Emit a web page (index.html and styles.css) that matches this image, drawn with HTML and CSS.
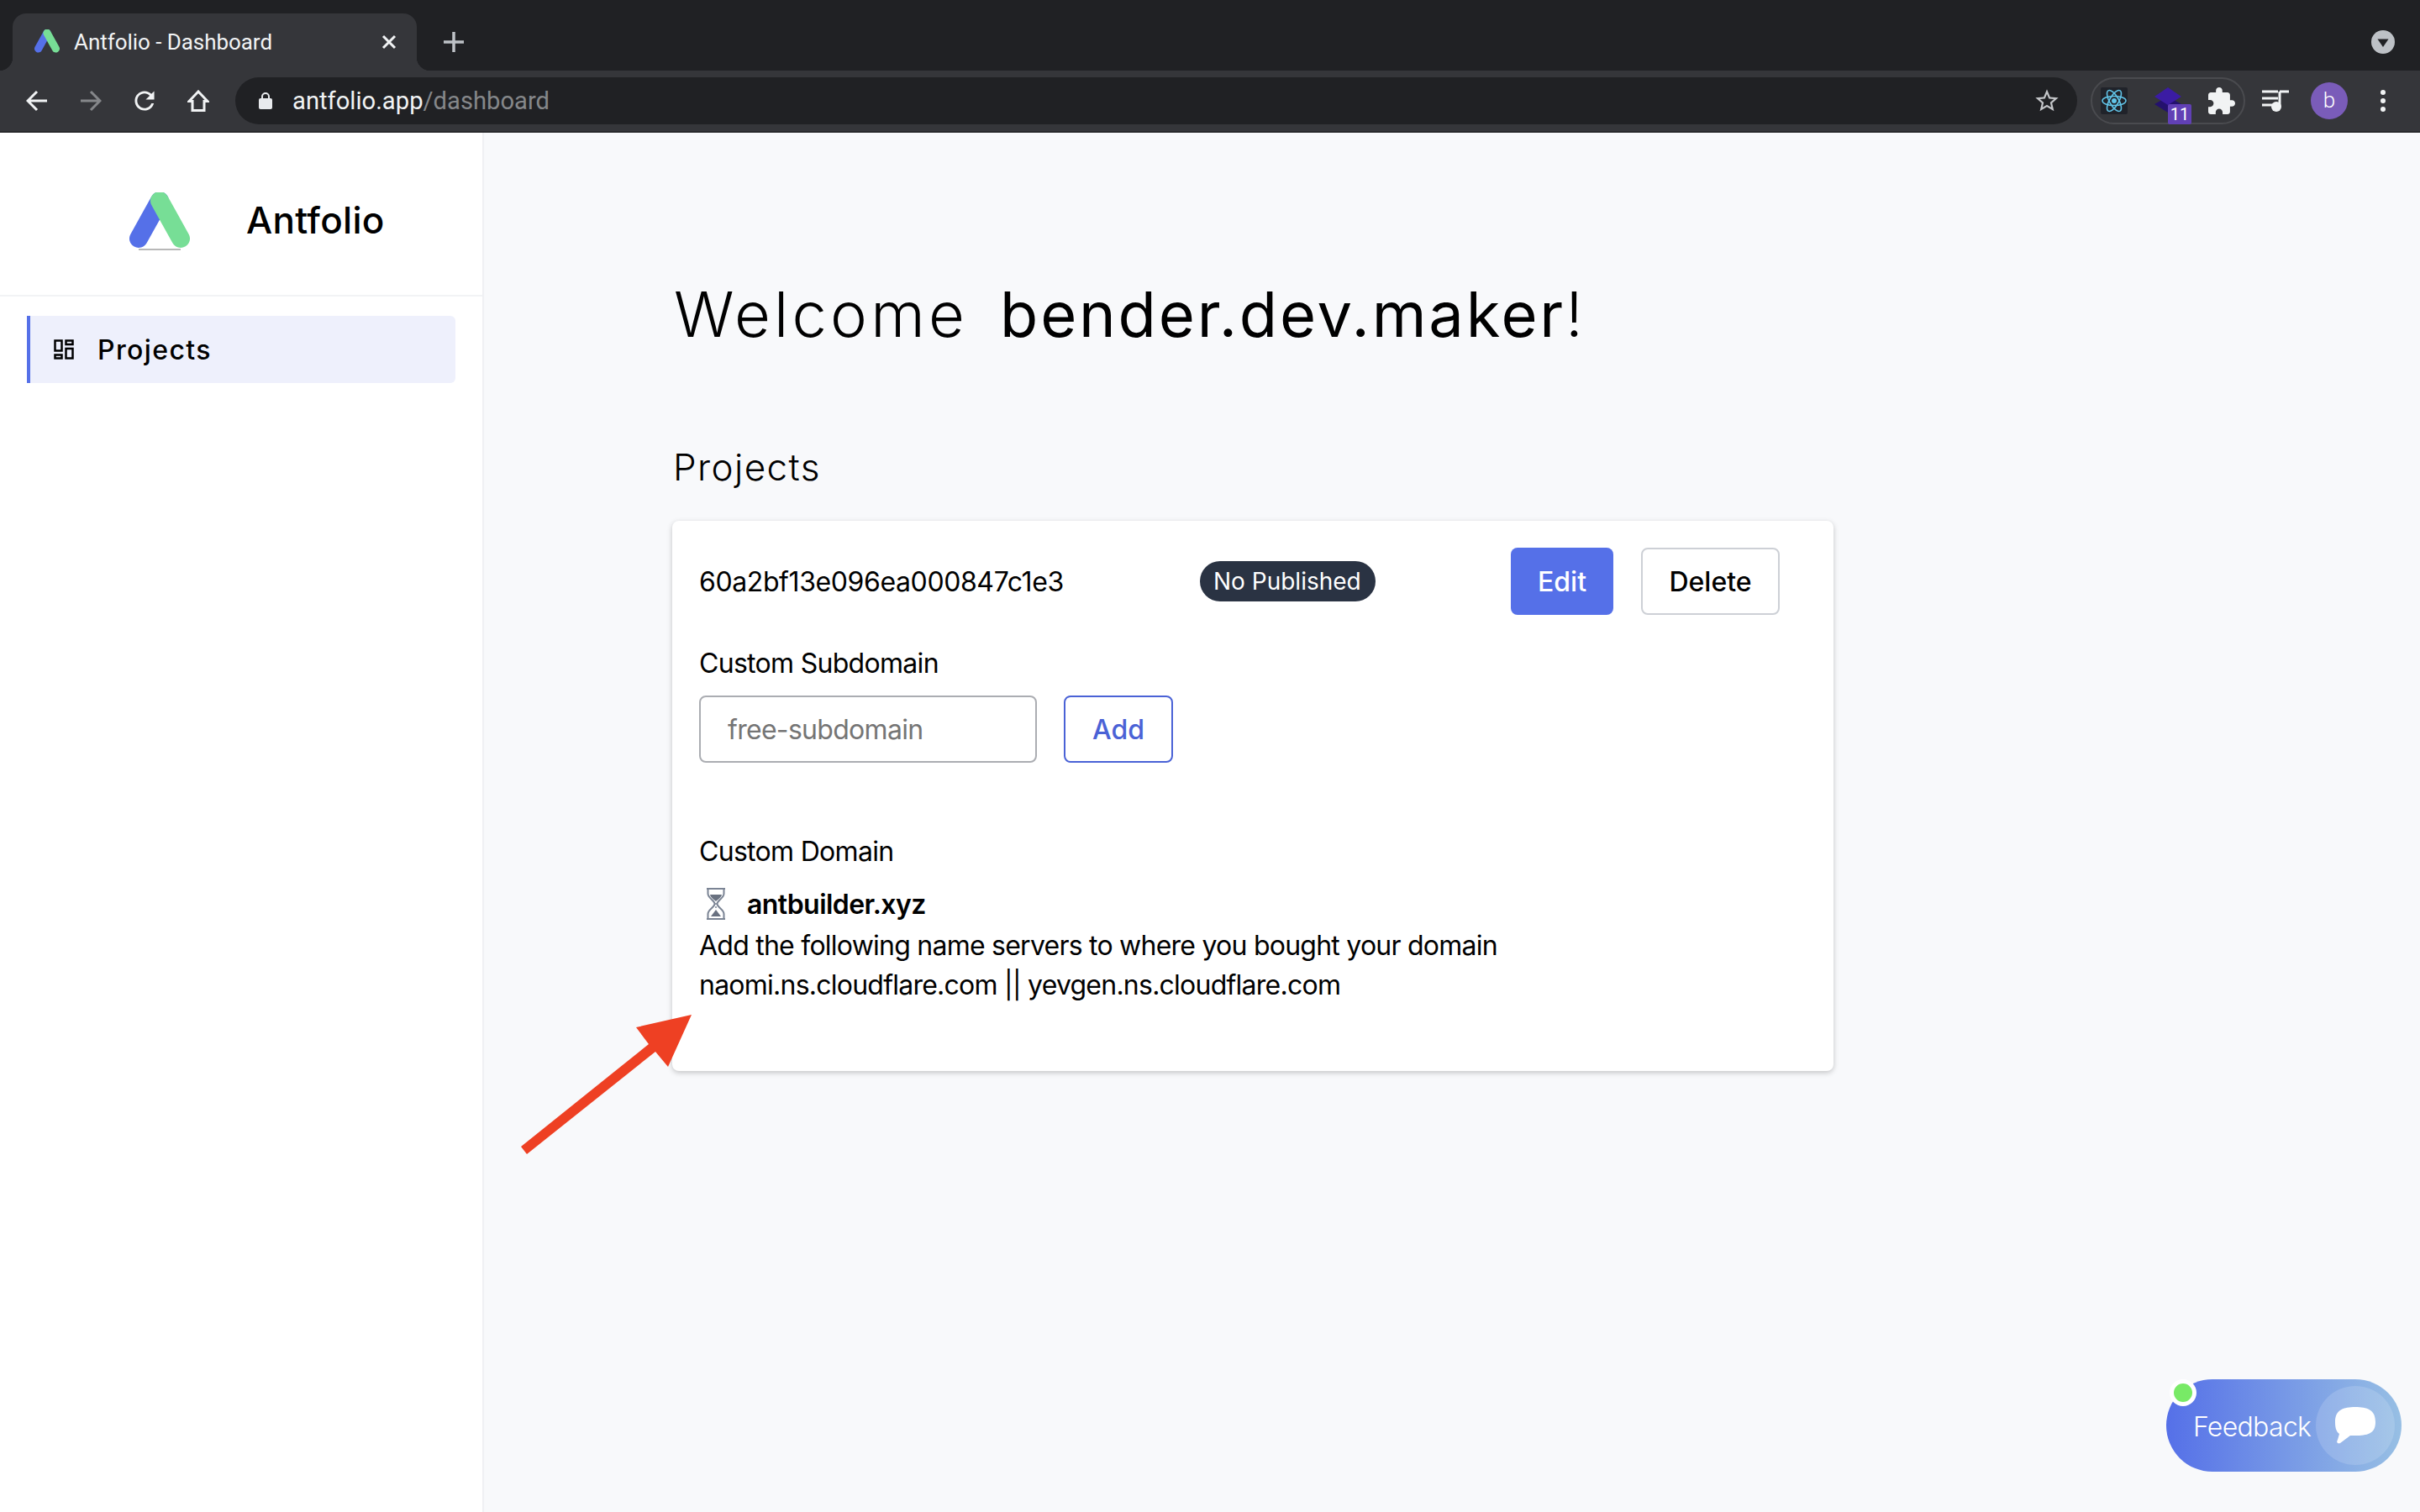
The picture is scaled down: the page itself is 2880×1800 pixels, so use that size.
FILE: index.html
```html
<!DOCTYPE html>
<html lang="en">

<head>
    <meta charset="UTF-8" />
    <meta name="viewport" content="width=device-width, initial-scale=1.0" />
    <title>Antfolio - Dashboard</title>

    <link rel="stylesheet" href="styles.css">
</head>

<body>
    <header class="browser">
        <div class="tabstrip">
            <div class="tab">
                <svg class="tab-favicon" viewBox="0 0 72 72">
                    <path d="M11 55 36 10" class="logo-blue" />
                    <path d="M36 10 61 55" class="logo-green" />
                </svg>
                <span class="tab-title">Antfolio - Dashboard</span>
                <svg class="tab-close" viewBox="0 0 18 18">
                    <path d="M2 2 16 16M16 2 2 16" />
                </svg>
            </div>
            <svg class="tab-new" viewBox="0 0 24 24">
                <path d="M12 0V24M0 12H24" />
            </svg>
            <div class="tab-search">
                <svg viewBox="0 0 28 28">
                    <circle cx="14" cy="14" r="14" fill="#bdc1c6" />
                    <path d="M7.5 10.5H20.5L14 20Z" fill="#202124" />
                </svg>
            </div>
        </div>
        <div class="toolbar">
            <svg class="nav-icon" viewBox="0 0 26 26">
                <path d="M25 13H3M13 2 2 13 13 24" />
            </svg>
            <svg class="nav-icon nav-icon-off" viewBox="0 0 26 26">
                <path d="M1 13H23M13 2 24 13 13 24" />
            </svg>
            <svg class="nav-icon nav-icon-fill" viewBox="3 3 18 18">
                <path d="M17.65 6.35C16.2 4.9 14.21 4 12 4c-4.42 0-7.99 3.58-7.99 8s3.57 8 7.99 8c3.73 0 6.84-2.55 7.73-6h-2.08c-.82 2.33-3.04 4-5.65 4-3.31 0-6-2.69-6-6s2.69-6 6-6c1.66 0 3.14.69 4.22 1.78L13 11h7V4l-2.35 2.35z" />
            </svg>
            <svg class="nav-icon" viewBox="0 0 26 26">
                <path d="M13 2 2 13.5H6V24.500H20V13.500H24Z" />
            </svg>
            <div class="omnibox">
                <svg class="omnibox-lock" viewBox="0 0 16 20">
                    <path d="M4 8V5a4 4 0 0 1 8 0V8" fill="none" stroke="#e8eaed" stroke-width="2" />
                    <rect y="7" width="16" height="13" rx="2" fill="#e8eaed" />
                </svg>
                <span class="omnibox-url">antfolio.app<span class="omnibox-path">/dashboard</span></span>
                <svg class="omnibox-star" viewBox="1 1 22 22">
                    <path d="M22 9.24l-7.19-.62L12 2 9.190 8.630 2 9.240l5.460 4.730L5.820 21 12 17.270 18.180 21l-1.630-7.030L22 9.240zM12 15.400l-3.760 2.270 1-4.280-3.320-2.880 4.380-.38L12 6.100l1.710 4.040 4.380.38-3.320 2.880 1 4.280L12 15.400z" />
                </svg>
            </div>
            <div class="extensions">
                <svg class="ext-icon" viewBox="0 0 32 32">
                    <rect width="32" height="32" rx="2" fill="#20232a" />
                    <g fill="none" stroke="#61c4e8" stroke-width="1.600">
                        <ellipse cx="16" cy="16" rx="14" ry="5.500" />
                        <ellipse cx="16" cy="16" rx="14" ry="5.500" transform="rotate(60 16 16)" />
                        <ellipse cx="16" cy="16" rx="14" ry="5.500" transform="rotate(120 16 16)" />
                    </g>
                    <circle cx="16" cy="16" r="3" fill="#61c4e8" />
                </svg>
                <div class="ext-stack">
                    <svg class="ext-icon" viewBox="0 0 32 32">
                        <path d="M16 11 32 20 16 30 0 20Z" fill="#24116e" />
                        <path d="M16 0 32 11 16 21 0 11Z" fill="#3b1ca3" />
                    </svg>
                    <span class="ext-badge">11</span>
                </div>
                <svg class="ext-icon ext-puzzle" viewBox="2 1 21 21">
                    <path d="M20.500 11H19V7c0-1.100-.9-2-2-2h-4V3.500C13 2.120 11.880 1 10.500 1S8 2.120 8 3.500V5H4c-1.100 0-1.990.9-1.990 2v3.800H3.500c1.490 0 2.700 1.210 2.700 2.700s-1.210 2.700-2.700 2.700H2V20c0 1.100.9 2 2 2h3.800v-1.500c0-1.490 1.210-2.700 2.700-2.700 1.490 0 2.700 1.210 2.700 2.700V22H17c1.100 0 2-.9 2-2v-4h1.500c1.380 0 2.500-1.120 2.500-2.500S21.880 11 20.500 11z" />
                </svg>
            </div>
            <svg class="toolbar-queue" viewBox="0 0 32 26">
                <path d="M0 2H19M0 10H19M0 18H13" stroke="#f1f3f4" stroke-width="3" fill="none" />
                <path d="M21 2V20" stroke="#f1f3f4" stroke-width="3" fill="none" />
                <path d="M21 2H32" stroke="#f1f3f4" stroke-width="3" fill="none" />
                <circle cx="17" cy="20" r="6" fill="#f1f3f4" />
            </svg>
            <div class="avatar">b</div>
            <div class="toolbar-menu">
                <i></i><i></i><i></i>
            </div>
        </div>
    </header>

    <div class="app">
        <aside class="sidebar">
            <div class="brand">
                <svg class="brand-logo" viewBox="0 0 72 72">
                    <path d="M11 55 36 10" class="logo-blue" />
                    <path d="M36 10 61 55" class="logo-green" />
                    <path d="M11 68H61" stroke="#b8b8b8" stroke-width="2" />
                </svg>
                <span class="brand-name">Antfolio</span>
            </div>
            <nav class="menu">
                <a class="menu-item">
                    <svg class="menu-icon" viewBox="0 0 24 24">
                        <path d="M1.500 1.500H9.500V13.500H1.500ZM1.500 18.500H9.500V22.500H1.500ZM14.500 1.500H22.500V6H14.500ZM14.500 11H22.500V22.500H14.500Z" />
                    </svg>
                    Projects
                </a>
            </nav>
        </aside>

        <main class="content">
            <h1 class="welcome">Welcome <b>bender.dev.maker</b>!</h1>
            <h2 class="section-title">Projects</h2>

            <section class="card">
                <div class="project-row">
                    <span class="project-id">60a2bf13e096ea000847c1e3</span>
                    <span class="badge">No Published</span>
                    <div class="project-actions">
                        <button class="button button-primary">Edit</button>
                        <button class="button button-default">Delete</button>
                    </div>
                </div>

                <label class="field-label" for="subdomain">Custom Subdomain</label>
                <div class="subdomain-row">
                    <input type="text" id="subdomain" class="input" placeholder="free-subdomain" />
                    <button class="button button-outline">Add</button>
                </div>

                <div class="field-label field-label-domain">Custom Domain</div>
                <div class="domain-name">
                    <svg class="hourglass" viewBox="0 0 24 38">
                        <path d="M1 1H23M1 37H23" stroke="#7b8494" stroke-width="2" fill="none" />
                        <path d="M2.500 1V7C2.500 12 10.500 15 10.500 19C10.500 23 2.500 26 2.500 31V37M21.500 1V7C21.500 12 13.500 15 13.500 19C13.500 23 21.500 26 21.500 31V37" stroke="#7b8494" stroke-width="2" fill="none" />
                        <path d="M5 8H19C18 12 14 14 12 16C10 14 6 12 5 8Z" fill="#697180" />
                        <path d="M12 26 18 34H6Z" fill="#697180" />
                        <path d="M12 18V26" stroke="#7b8494" stroke-width="1.500" stroke-dasharray="2 2" />
                    </svg>
                    <b>antbuilder.xyz</b>
                </div>
                <p class="domain-help">Add the following name servers to where you bought your domain</p>
                <p class="domain-help">naomi.ns.cloudflare.com || yevgen.ns.cloudflare.com</p>
            </section>
        </main>
    </div>

    <!-- annotation drawn on top of the screenshot -->
    <svg class="arrow" viewBox="0 0 210 170">
        <path d="M0 157 152 35 137 15 203 0 175 62 160 44 7 166Z" fill="#ee4023" />
    </svg>

    <div class="feedback">
        <span class="feedback-dot"></span>
        <span class="feedback-text">Feedback</span>
        <span class="feedback-circle">
            <svg viewBox="0 0 48 44">
                <path d="M24 0C38 0 48 3 48 18C48 32 38 34 24 34C22 34 20 34 18 34L6 43C3 44 1 42 3 39L5 32C1 29 0 24 0 18C0 3 10 0 24 0Z" fill="#fff" />
            </svg>
        </span>
    </div>
</body>

</html>
```

FILE: styles.css
```css
* {
    margin: 0;
    padding: 0;
    box-sizing: border-box;
}

html,
body {
    height: 100%;
}

body {
    font-family: "Inter", "Liberation Sans", sans-serif;
    font-size: 32px;
    color: #000;
    background: #f8f9fb;
    overflow: hidden;
}

/**
 * Browser chrome
 */
.browser {
    font-family: "Roboto", "Liberation Sans", sans-serif;
    color: #e8eaed;
}

.tabstrip {
    display: flex;
    align-items: center;
    height: 84px;
    padding: 16px 0 0 15px;
    background: #202124;
}

.tab {
    position: relative;
    display: flex;
    align-items: center;
    align-self: flex-end;
    width: 481px;
    height: 68px;
    padding-left: 26px;
    background: #35363a;
    border-radius: 16px 16px 0 0;
}

.tab::before,
.tab::after {
    content: "";
    position: absolute;
    bottom: 0;
    width: 16px;
    height: 16px;
}

.tab::before {
    left: -16px;
    background: radial-gradient(circle at 0 0, transparent 16px, #35363a 16.5px);
}

.tab::after {
    right: -16px;
    background: radial-gradient(circle at 100% 0, transparent 16px, #35363a 16.5px);
}

.tab-favicon {
    width: 30px;
    height: 30px;
}

.tab-title {
    margin-left: 17px;
    font-size: 26px;
    letter-spacing: -0.05px;
    color: #f1f3f4;
    white-space: nowrap;
}

.tab-close {
    width: 18px;
    height: 18px;
    margin-left: auto;
    margin-right: 24px;
}

.tab-close path {
    fill: none;
    stroke: #f1f3f4;
    stroke-width: 3;
}

.tab-new {
    width: 24px;
    height: 24px;
    margin-left: 32px;
}

.tab-new path {
    fill: none;
    stroke: #bdc1c6;
    stroke-width: 3.500;
}

.tab-search {
    display: flex;
    margin-left: auto;
    padding-right: 30px;
}

.tab-search svg {
    width: 28px;
    height: 28px;
}

.toolbar {
    display: flex;
    align-items: center;
    height: 74px;
    padding-left: 31px;
    background: #35363a;
    border-bottom: 2px solid #28292c;
}

.nav-icon {
    flex: none;
    width: 26px;
    height: 26px;
    margin-right: 38px;
}

.nav-icon path {
    fill: none;
    stroke: #f1f3f4;
    stroke-width: 3;
}

.nav-icon-off path {
    stroke: #85878a;
}

.nav-icon-fill path {
    fill: #f1f3f4;
    stroke: none;
}

.omnibox {
    display: flex;
    align-items: center;
    width: 2192px;
    height: 56px;
    margin-left: -7px;
    padding: 0 21px 0 28px;
    background: #202124;
    border-radius: 28px;
}

.omnibox-lock {
    width: 16px;
    height: 20px;
}

.omnibox-url {
    margin-left: 24px;
    font-size: 29.200px;
    color: #f1f3f4;
}

.omnibox-path {
    color: #85878a;
}

.omnibox-star {
    width: 30px;
    height: 30px;
    margin-left: auto;
    fill: #c4c6c9;
}

.extensions {
    display: flex;
    align-items: center;
    gap: 32px;
    width: 184px;
    height: 56px;
    margin-left: 16px;
    padding-left: 10px;
    border: 2px solid #4a4b4f;
    border-radius: 28px;
}

.ext-icon {
    display: block;
    flex: none;
    width: 32px;
    height: 32px;
}

.ext-stack {
    position: relative;
}

.ext-badge {
    position: absolute;
    left: 16px;
    top: 20px;
    width: 28px;
    height: 24px;
    font-size: 20px;
    line-height: 25px;
    text-align: center;
    color: #fff;
    background: #6140b5;
    border-radius: 2px;
}

.ext-puzzle {
    fill: #f1f3f4;
}

.toolbar-queue {
    flex: none;
    width: 32px;
    height: 26px;
    margin-left: 20px;
}

.avatar {
    flex: none;
    width: 44px;
    height: 44px;
    margin-left: 26px;
    font-size: 26px;
    font-weight: 300;
    line-height: 43px;
    text-align: center;
    color: #fff;
    background: #7a5cb9;
    border-radius: 50%;
}

.toolbar-menu {
    display: flex;
    flex-direction: column;
    gap: 4px;
    margin-left: 39px;
}

.toolbar-menu i {
    display: block;
    width: 6px;
    height: 6px;
    background: #f1f3f4;
    border-radius: 50%;
}

/**
 * App layout
 */
.app {
    display: flex;
    height: 1642px;
}

.sidebar {
    flex: none;
    width: 576px;
    background: #fff;
    border-right: 2px solid #eff0f3;
}

.brand {
    display: flex;
    align-items: center;
    height: 195px;
    padding: 14px 0 0 154px;
    border-bottom: 2px solid #f2f3f5;
}

.brand-logo {
    width: 72px;
    height: 72px;
    margin-top: 6px;
}

.logo-blue,
.logo-green {
    fill: none;
    stroke-width: 22;
    stroke-linecap: round;
}

.logo-blue {
    stroke: #5570e8;
}

.logo-green {
    stroke: #77de96;
}

.brand-name {
    margin-left: 67px;
    font-size: 44px;
    font-weight: 500;
    letter-spacing: 0.3px;
}

.menu {
    padding: 23px 32px;
}

.menu-item {
    display: flex;
    align-items: center;
    height: 80px;
    padding-left: 28px;
    font-size: 32px;
    font-weight: 500;
    letter-spacing: 1.4px;
    background: #eef0fc;
    border-left: 4px solid #5570e8;
    border-radius: 0 6px 6px 0;
}

.menu-icon {
    width: 24px;
    height: 24px;
    margin-right: 28px;
    fill: none;
    stroke: #000;
    stroke-width: 2.500;
}

.content {
    flex: 1;
    padding: 168px 0 0 224px;
}

.welcome {
    padding-left: 2px;
    font-size: 74px;
    font-weight: 300;
    letter-spacing: 4.2px;
    line-height: 96px;
    white-space: nowrap;
}

.welcome b {
    margin-left: 13px;
    font-weight: 400;
    letter-spacing: 2.8px;
}

.section-title {
    margin-top: 106px;
    padding-left: 1px;
    font-size: 44px;
    font-weight: 300;
    letter-spacing: 1.4px;
    line-height: 56px;
}

/**
 * Project card
 */
.card {
    width: 1382px;
    margin-top: 36px;
    padding: 32px 64px 79px 32px;
    letter-spacing: -0.7px;
    background: #fff;
    border-radius: 8px;
    box-shadow: 0 2px 6px rgba(0, 0, 0, 0.22);
}

.project-row {
    display: flex;
    align-items: center;
}

.project-id {
    width: 596px;
    letter-spacing: -0.4px;
}

.badge {
    height: 48px;
    padding: 0 17px 0 16px;
    font-size: 28px;
    letter-spacing: 0;
    line-height: 48px;
    color: #fff;
    background: #2a3343;
    border-radius: 24px;
}

.project-actions {
    display: flex;
    gap: 33px;
    margin-left: auto;
}

.button {
    height: 80px;
    font-family: inherit;
    font-size: 32px;
    font-weight: 500;
    background: #fff;
    border-radius: 8px;
}

.button-primary {
    width: 122px;
    color: #fff;
    background: #5570e8;
    border: 0;
}

.button-default {
    width: 165px;
    color: #000;
    border: 2px solid #cdd0d6;
}

.button-outline {
    width: 130px;
    color: #4a62d6;
    border: 2px solid #4a62d6;
}

.field-label {
    display: block;
    margin-top: 34px;
    line-height: 48px;
}

.field-label-domain {
    margin-top: 82px;
}

.subdomain-row {
    display: flex;
    gap: 32px;
    margin-top: 14px;
}

.input {
    width: 402px;
    height: 80px;
    padding-left: 32px;
    font-family: inherit;
    font-size: 32px;
    letter-spacing: -0.7px;
    border: 2px solid #abadb2;
    border-radius: 8px;
}

.input::placeholder {
    color: #757575;
    opacity: 1;
}

.domain-name {
    display: flex;
    align-items: center;
    height: 48px;
    margin: 14px 0 2px;
}

.domain-name b {
    margin-left: 25px;
    font-weight: 600;
    letter-spacing: -0.55px;
}

.hourglass {
    width: 24px;
    height: 38px;
    margin-left: 8px;
}

.domain-help {
    letter-spacing: -0.76px;
    line-height: 47px;
}

/**
 * Things lying over the page
 */
.arrow {
    position: absolute;
    left: 620px;
    top: 1208px;
    width: 210px;
    height: 170px;
}

.feedback {
    position: fixed;
    right: 22px;
    bottom: 48px;
    display: flex;
    align-items: center;
    width: 280px;
    height: 110px;
    padding-left: 32px;
    background: linear-gradient(90deg, #5570e8, #97bfe4);
    border-radius: 55px;
}

.feedback-dot {
    position: absolute;
    left: 4px;
    top: 0;
    width: 32px;
    height: 32px;
    background: #78ea66;
    border: 5px solid #fff;
    border-radius: 50%;
}

.feedback-text {
    margin-top: 2px;
    font-size: 32px;
    font-weight: 300;
    letter-spacing: -0.7px;
    color: #fff;
}

.feedback-circle {
    display: flex;
    align-items: center;
    justify-content: center;
    width: 94px;
    height: 94px;
    margin-left: auto;
    margin-right: 8px;
    background: rgba(255, 255, 255, 0.15);
    border-radius: 50%;
}

.feedback-circle svg {
    width: 48px;
    height: 44px;
}
```
